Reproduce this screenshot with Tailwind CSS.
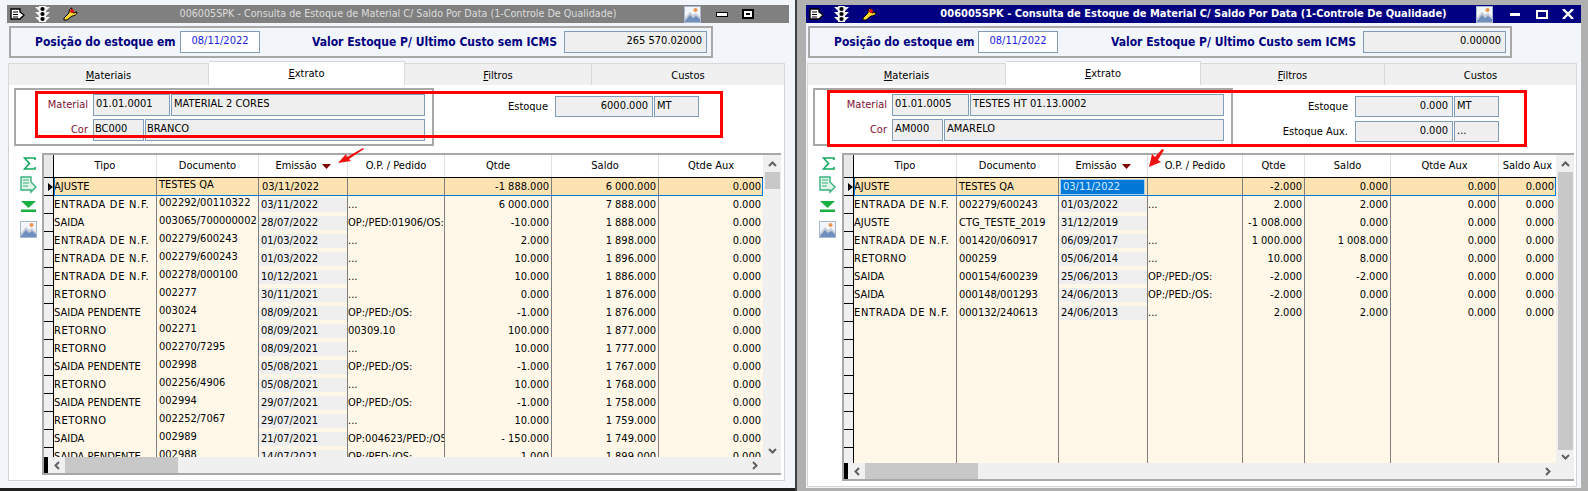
<!DOCTYPE html>
<html lang="pt-BR">
<head>
    <meta charset="UTF-8">
    <title>006005SPK - Consulta de Estoque</title>
    <script src="https://cdn.jsdelivr.net/npm/@tailwindcss/browser@4"></script>
</head>

<body class="relative w-[1588px] h-[491px] overflow-hidden flex bg-[#b0b0b0] text-[11px] text-black font-['DejaVu_Sans_Condensed','Noto_Sans',sans-serif]">
    <!-- icons used in both windows -->
    <svg class="hidden">
        <symbol id="doc-white" viewBox="0 0 15 12">
            <path d="M1 1h9v3l4 3-4 4H1z" fill="#fff" stroke="#000" stroke-width="1.4"/>
            <path d="M3 4h5M3 6.5h5M3 9h5" stroke="#000"/>
        </symbol>
        <symbol id="traffic" viewBox="0 0 15 16">
            <path d="M4 0h7v16H4zM0 1h4v4zM15 1h-4v4zM0 6h4v4zM15 6h-4v4zM0 11h4v4zM15 11h-4v4z" fill="#f4f4f4"/>
            <circle cx="7.5" cy="3" r="2.100" fill="#000"/>
            <circle cx="7.5" cy="8" r="2.100" fill="#000"/>
            <circle cx="7.5" cy="13" r="2.100" fill="#000"/>
        </symbol>
        <symbol id="wrench" viewBox="0 0 15 14">
            <path d="M1 11l5-5c0-3 1-5 3-5l-1 3 2 2 4-1c0 3-3 4-5 4l-5 4H1z" fill="#ffd92e" stroke="#000" stroke-width="1"/>
            <circle cx="9" cy="4" r="2" fill="#e01010"/>
        </symbol>
        <symbol id="picture" viewBox="0 0 17 17">
            <rect x="0.5" y="0.5" width="16" height="16" fill="#f2f5fa" stroke="#a8b8d0"/>
            <path d="M1 16v-3l5-6 3 3 3-2 4 5v3z" fill="#6f8fbc"/>
            <path d="M1 12l5-6 3 3 3-2 4 4v2l-4-3-3 2-3-3-5 6z" fill="#c4ccd8"/>
            <circle cx="11.500" cy="4" r="2" fill="#ee9650"/>
        </symbol>
        <symbol id="sigma" viewBox="0 0 13 13">
            <path d="M12 3V1H1.500L6.500 6.500 1.500 12H12v-2" fill="none" stroke="#10a860" stroke-width="1.600"/>
        </symbol>
        <symbol id="doc-green" viewBox="0 0 17 18">
            <path d="M1 1h10v5l5 5-5 5v-2H1z" fill="#dff5e8" stroke="#38b07c" stroke-width="1.400"/>
            <path d="M3 4h6M3 7h6M3 10h5" stroke="#38b07c"/>
        </symbol>
        <symbol id="down-green" viewBox="0 0 15 11">
            <path d="M0 0h15L7.500 7z" fill="#18b040"/>
            <path d="M0 8.500h15V11H0z" fill="#18b040"/>
        </symbol>
    </svg>

    <!-- left window -->
    <div class="w-[795px] shrink-0 flex flex-col bg-[#f2f5fa]">
        <div class="ml-[7px] mt-[5px] w-[782px] h-[483px] flex flex-col">
            <div class="h-[18px] bg-[#808080] flex items-center text-[#dcdcdc] text-[10.700px]">
                <div class="w-[105px] flex items-center">
                    <svg class="w-[15px] h-[12px] ml-[3px]"><use href="#doc-white"/></svg>
                    <svg class="w-[15px] h-[16px] ml-[10px]"><use href="#traffic"/></svg>
                    <svg class="w-[15px] h-[14px] ml-[13px]"><use href="#wrench"/></svg>
                </div>
                <div class="flex-1 text-center whitespace-nowrap">006005SPK - Consulta de Estoque de Material C/ Saldo Por Data (1-Controle De Qualidade)</div>
                <div class="w-[105px] flex items-center">
                    <svg class="w-[17px] h-[17px]"><use href="#picture"/></svg>
                    <div class="ml-[15px] w-[12px] h-[5px] bg-white border border-black"></div>
                    <div class="ml-[14px] w-[12px] h-[10px] bg-white border-2 border-black flex items-center justify-center"><div class="w-[4px] h-[2px] bg-black"></div></div>
                </div>
            </div>

            <div class="mt-[3px] ml-[2px] w-[704px] h-[32px] border-2 border-[#a8a8a8] flex items-center font-bold text-[#000080] text-[12px]">
                <span class="ml-[24px] w-[143px] whitespace-nowrap">Posição do estoque em</span>
                <div class="ml-[2px] w-[80px] h-[22px] bg-white border border-[#7f9db9] text-[#2020e0] text-[11px] font-normal text-center leading-[18px]">08/11/2022</div>
                <span class="ml-[52px] w-[252px] whitespace-nowrap">Valor Estoque P/ Ultimo Custo sem ICMS</span>
                <div class="w-[143px] h-[22px] bg-[#efefef] border border-[#7f9db9] text-black text-[11px] font-normal text-right pr-[4px] leading-[18px]">265 570.02000</div>
            </div>

            <div class="mt-[3px] h-[24px] ml-[1px] flex items-end text-center">
                <div class="w-[201px] h-[22px] bg-[#f0f0f0] border-t border-r border-l border-[#d8d8d8] leading-[23px]"><u>M</u>ateriais</div>
                <div class="w-[196px] h-[24px] bg-white border-t border-r border-[#d8d8d8] leading-[23px]"><u>E</u>xtrato</div>
                <div class="w-[187px] h-[22px] bg-[#f0f0f0] border-t border-r border-[#d8d8d8] leading-[23px]"><u>F</u>iltros</div>
                <div class="w-[193px] h-[22px] bg-[#f0f0f0] border-t border-r border-[#d8d8d8] leading-[23px]">Custos</div>
            </div>

            <div class="ml-[1px] w-[777px] h-[396px] bg-white border border-t-0 border-[#d4d4d4] pt-[3px]">
                <div class="flex">
                    <div class="ml-[5px] w-[420px] h-[58px] border-2 border-[#a8a8a8] pt-[4px] flex flex-col gap-[3px]">
                        <div class="flex h-[22px]">
                            <span class="w-[72px] text-right text-[#801030] pt-[3px]">Material</span>
                            <div class="ml-[5px] w-[77px] bg-[#efefef] border border-[#7f9db9] px-[2px] leading-[18px]">01.01.0001</div>
                            <div class="ml-[1px] w-[254px] bg-[#efefef] border border-[#7f9db9] px-[2px] leading-[18px]">MATERIAL 2 CORES</div>
                        </div>
                        <div class="flex h-[22px]">
                            <span class="w-[72px] text-right text-[#801030] pt-[3px]">Cor</span>
                            <div class="ml-[5px] w-[51px] bg-[#efefef] border border-[#7f9db9] px-[1px] leading-[18px]">BC000</div>
                            <div class="ml-[1px] w-[280px] bg-[#efefef] border border-[#7f9db9] px-[1px] leading-[18px]">BRANCO</div>
                        </div>
                    </div>
                    <div class="mt-[8px] flex h-[21px]">
                        <span class="w-[114px] text-right pt-[3px]">Estoque</span>
                        <div class="ml-[7px] w-[98px] bg-[#efefef] border border-[#7f9db9] text-right pr-[4px] leading-[17px]">6000.000</div>
                        <div class="ml-[1px] w-[45px] bg-[#efefef] border border-[#7f9db9] px-[2px] leading-[17px]">MT</div>
                    </div>
                </div>
                <div class="mt-[7px] flex">
                    <div class="w-[33px] pl-[11px] pt-[4px] flex flex-col">
                        <svg class="w-[13px] h-[13px] ml-[3px]"><use href="#sigma"/></svg>
                        <svg class="w-[17px] h-[18px] mt-[6px]"><use href="#doc-green"/></svg>
                        <svg class="w-[15px] h-[11px] mt-[7px] ml-[1px]"><use href="#down-green"/></svg>
                        <svg class="w-[17px] h-[17px] mt-[9px]"><use href="#picture"/></svg>
                    </div>
                    <div id="grid-left"></div>
                </div>
            </div>
        </div>
        <div class="flex-1"></div>
        <div class="h-[3px] bg-[#202020]"></div>
    </div>

    <div class="w-[2px] shrink-0 bg-[#404040]"></div>

    <!-- right window -->
    <div class="ml-[9px] mt-[5px] w-[775px] h-[483px] shrink-0 flex flex-col bg-[#f2f5fa]">
        <div class="h-[18px] bg-[#000080] flex items-center text-white font-bold text-[11px]">
            <div class="w-[105px] flex items-center">
                <svg class="w-[15px] h-[12px] ml-[3px]"><use href="#doc-white"/></svg>
                <svg class="w-[15px] h-[16px] ml-[10px]"><use href="#traffic"/></svg>
                <svg class="w-[15px] h-[14px] ml-[13px]"><use href="#wrench"/></svg>
            </div>
            <div class="flex-1 text-center whitespace-nowrap overflow-hidden">006005SPK - Consulta de Estoque de Material C/ Saldo Por Data (1-Controle De Qualidade)</div>
            <div class="w-[105px] flex items-center">
                <svg class="w-[17px] h-[17px]"><use href="#picture"/></svg>
                <div class="ml-[17px] w-[10px] h-[3px] bg-white"></div>
                <div class="ml-[16px] w-[12px] h-[9px] border-2 border-white"></div>
                <svg class="ml-[14px] w-[12px] h-[10px]" viewBox="0 0 12 10"><path d="M1 0l10 10M11 0L1 10" stroke="#fff" stroke-width="2.400"/></svg>
            </div>
        </div>

        <div class="mt-[3px] ml-[2px] w-[704px] h-[32px] border-2 border-[#a8a8a8] flex items-center font-bold text-[#000080] text-[12px]">
            <span class="ml-[24px] w-[143px] whitespace-nowrap">Posição do estoque em</span>
            <div class="ml-[1px] w-[80px] h-[22px] bg-white border border-[#7f9db9] text-[#2020e0] text-[11px] font-normal text-center leading-[18px]">08/11/2022</div>
            <span class="ml-[53px] w-[252px] whitespace-nowrap">Valor Estoque P/ Ultimo Custo sem ICMS</span>
            <div class="w-[143px] h-[22px] bg-[#efefef] border border-[#7f9db9] text-black text-[11px] font-normal text-right pr-[4px] leading-[18px]">0.00000</div>
        </div>

        <div class="mt-[3px] h-[24px] ml-[1px] flex items-end text-center">
            <div class="w-[199px] h-[22px] bg-[#f0f0f0] border-t border-r border-l border-[#d8d8d8] leading-[23px]"><u>M</u>ateriais</div>
            <div class="w-[195px] h-[24px] bg-white border-t border-r border-[#d8d8d8] leading-[23px]"><u>E</u>xtrato</div>
            <div class="w-[184px] h-[22px] bg-[#f0f0f0] border-t border-r border-[#d8d8d8] leading-[23px]"><u>F</u>iltros</div>
            <div class="w-[192px] h-[22px] bg-[#f0f0f0] border-t border-r border-[#d8d8d8] leading-[23px]">Custos</div>
        </div>

        <div class="ml-[1px] w-[770px] h-[402px] bg-white border border-t-0 border-[#d4d4d4] pt-[3px]">
            <div class="flex">
                <div class="ml-[5px] w-[420px] h-[58px] border-2 border-[#a8a8a8] pt-[4px] flex flex-col gap-[3px]">
                    <div class="flex h-[22px]">
                        <span class="w-[72px] text-right text-[#801030] pt-[3px]">Material</span>
                        <div class="ml-[5px] w-[77px] bg-[#efefef] border border-[#7f9db9] px-[2px] leading-[18px]">01.01.0005</div>
                        <div class="ml-[1px] w-[254px] bg-[#efefef] border border-[#7f9db9] px-[2px] leading-[18px]">TESTES HT 01.13.0002</div>
                    </div>
                    <div class="flex h-[22px]">
                        <span class="w-[72px] text-right text-[#801030] pt-[3px]">Cor</span>
                        <div class="ml-[5px] w-[51px] bg-[#efefef] border border-[#7f9db9] px-[2px] leading-[18px]">AM000</div>
                        <div class="ml-[1px] w-[280px] bg-[#efefef] border border-[#7f9db9] px-[2px] leading-[18px]">AMARELO</div>
                    </div>
                </div>
                <div class="mt-[8px] flex flex-col gap-[4px]">
                    <div class="flex h-[21px]">
                        <span class="w-[115px] text-right pt-[3px]">Estoque</span>
                        <div class="ml-[7px] w-[98px] bg-[#efefef] border border-[#7f9db9] text-right pr-[4px] leading-[17px]">0.000</div>
                        <div class="ml-[1px] w-[45px] bg-[#efefef] border border-[#7f9db9] px-[2px] leading-[17px]">MT</div>
                    </div>
                    <div class="flex h-[21px]">
                        <span class="w-[115px] text-right pt-[3px]">Estoque Aux.</span>
                        <div class="ml-[7px] w-[98px] bg-[#efefef] border border-[#7f9db9] text-right pr-[4px] leading-[17px]">0.000</div>
                        <div class="ml-[1px] w-[45px] bg-[#efefef] border border-[#7f9db9] px-[2px] leading-[17px]">...</div>
                    </div>
                </div>
            </div>
            <div class="mt-[7px] flex">
                <div class="w-[34px] pl-[11px] pt-[4px] flex flex-col">
                    <svg class="w-[13px] h-[13px] ml-[3px]"><use href="#sigma"/></svg>
                    <svg class="w-[17px] h-[18px] mt-[6px]"><use href="#doc-green"/></svg>
                    <svg class="w-[15px] h-[11px] mt-[7px] ml-[1px]"><use href="#down-green"/></svg>
                    <svg class="w-[17px] h-[17px] mt-[9px]"><use href="#picture"/></svg>
                </div>
                <div id="grid-right"></div>
            </div>
        </div>
    </div>

    <!-- red annotations drawn over the screenshot -->
    <div class="absolute left-[35px] top-[91px] w-[688px] h-[47px] border-[3px] border-[#ff0000]"></div>
    <div class="absolute left-[827px] top-[90px] w-[700px] h-[57px] border-[3px] border-[#ff0000]"></div>
    <svg class="absolute left-[335px] top-[146px] w-[30px] h-[20px]" viewBox="0 0 30 20">
        <path d="M3 17l8-9 1 3 16-9 1 1-15 10 2 2z" fill="#ee1111"/>
    </svg>
    <svg class="absolute left-[1147px] top-[147px] w-[18px] h-[22px]" viewBox="0 0 18 22">
        <path d="M2 20l3-13 3 3 7-8 2 1-6 10 3 2z" fill="#ee1111"/>
    </svg>

    <script>
        const leftRows = [
            ['AJUSTE', 'TESTES QA', '03/11/2022', '', '-1 888.000', '6 000.000', '0.000'],
            ['ENTRADA DE N.F.', '002292/00110322', '03/11/2022', '...', '6 000.000', '7 888.000', '0.000'],
            ['SAIDA', '003065/700000002', '28/07/2022', 'OP:/PED:01906/OS:', '-10.000', '1 888.000', '0.000'],
            ['ENTRADA DE N.F.', '002279/600243', '01/03/2022', '...', '2.000', '1 898.000', '0.000'],
            ['ENTRADA DE N.F.', '002279/600243', '01/03/2022', '...', '10.000', '1 896.000', '0.000'],
            ['ENTRADA DE N.F.', '002278/000100', '10/12/2021', '...', '10.000', '1 886.000', '0.000'],
            ['RETORNO', '002277', '30/11/2021', '...', '0.000', '1 876.000', '0.000'],
            ['SAIDA PENDENTE', '003024', '08/09/2021', 'OP:/PED:/OS:', '-1.000', '1 876.000', '0.000'],
            ['RETORNO', '002271', '08/09/2021', '00309.10', '100.000', '1 877.000', '0.000'],
            ['RETORNO', '002270/7295', '08/09/2021', '...', '10.000', '1 777.000', '0.000'],
            ['SAIDA PENDENTE', '002998', '05/08/2021', 'OP:/PED:/OS:', '-1.000', '1 767.000', '0.000'],
            ['RETORNO', '002256/4906', '05/08/2021', '...', '10.000', '1 768.000', '0.000'],
            ['SAIDA PENDENTE', '002994', '29/07/2021', 'OP:/PED:/OS:', '-1.000', '1 758.000', '0.000'],
            ['RETORNO', '002252/7067', '29/07/2021', '...', '10.000', '1 759.000', '0.000'],
            ['SAIDA', '002989', '21/07/2021', 'OP:004623/PED:/OS:', '- 150.000', '1 749.000', '0.000'],
            ['SAIDA PENDENTE', '002988', '14/07/2021', 'OP:/PED:/OS:', '-1.000', '1 899.000', '0.000'],
        ];

        const rightRows = [
            ['AJUSTE', 'TESTES QA', '03/11/2022', '', '-2.000', '0.000', '0.000', '0.000'],
            ['ENTRADA DE N.F.', '002279/600243', '01/03/2022', '...', '2.000', '2.000', '0.000', '0.000'],
            ['AJUSTE', 'CTG_TESTE_2019', '31/12/2019', '', '-1 008.000', '0.000', '0.000', '0.000'],
            ['ENTRADA DE N.F.', '001420/060917', '06/09/2017', '...', '1 000.000', '1 008.000', '0.000', '0.000'],
            ['RETORNO', '000259', '05/06/2014', '...', '10.000', '8.000', '0.000', '0.000'],
            ['SAIDA', '000154/600239', '25/06/2013', 'OP:/PED:/OS:', '-2.000', '-2.000', '0.000', '0.000'],
            ['SAIDA', '000148/001293', '24/06/2013', 'OP:/PED:/OS:', '-2.000', '0.000', '0.000', '0.000'],
            ['ENTRADA DE N.F.', '000132/240613', '24/06/2013', '...', '2.000', '2.000', '0.000', '0.000'],
            ['', '', '', '', '', '', '', ''], ['', '', '', '', '', '', '', ''],
            ['', '', '', '', '', '', '', ''], ['', '', '', '', '', '', '', ''],
            ['', '', '', '', '', '', '', ''], ['', '', '', '', '', '', '', ''],
            ['', '', '', '', '', '', '', ''], ['', '', '', '', '', '', '', ''],
        ];

        const dividerClass = 'border-r border-[#808080]';

        // Tipo column: these words run wider in the original font
        function tipoSpacing(text) {
            if (text.includes('N.F.')) return 'tracking-[0.7px]';
            if (text === 'RETORNO') return 'tracking-[0.5px]';
            return '';
        }

        function renderGrid(targetId, cfg) {
            const head = cfg.headers.map((h) => {
                const sort = h === 'Emissão'
                    ? '<svg class="w-[9px] h-[5px] ml-[5px]" viewBox="0 0 9 5"><path d="M0 0h9L4.500 5z" fill="#800000"/></svg>' : '';
                return `<div class="h-full flex items-center justify-center border-r border-[#e0e0e0] whitespace-nowrap overflow-hidden">${h}${sort}</div>`;
            }).join('');

            const body = cfg.rows.map((row, r) => {
                const selected = r === 0;
                const cells = row.map((text, i) => {
                    const base = 'h-[18px] overflow-hidden whitespace-nowrap ' + dividerClass;
                    if (i === 2) {
                        if (selected && cfg.editing) {
                            return `<div class="${base} p-[1px] pr-[2px]"><div class="h-full bg-[#0078d7] border border-[#a8d0f0] text-[#d8ecff] pl-[2px] leading-[14px]">${text}</div></div>`;
                        }
                        if (selected) return `<div class="${base} pl-[3px] leading-[18px]">${text}</div>`;
                        if (!text) return `<div class="${base}"></div>`;
                        return `<div class="${base} py-[2px]"><div class="h-[14px] bg-[#efefef] pl-[2px] leading-[14px]">${text}</div></div>`;
                    }
                    if (i === 1) {
                        return `<div class="${base} pl-[2px] ${cfg.raiseDoc ? 'leading-[13px]' : 'leading-[18px]'}">${text}</div>`;
                    }
                    if (i >= 4) return `<div class="${base} text-right pr-[2px] leading-[18px]">${text}</div>`;
                    return `<div class="${base} leading-[18px] ${i === 0 ? tipoSpacing(text) : ''}">${text}</div>`;
                }).join('');
                const marker = selected
                    ? '<svg class="w-[5px] h-[8px] ml-[4px] mt-[5px]" viewBox="0 0 5 8"><path d="M0 0l5 4-5 4z" fill="#000"/></svg>' : '';
                // focus outline of the current record
                const outline = selected
                    ? '<div class="absolute left-[10px] right-0 inset-y-0 border-l border-r border-b border-[#0078d7] pointer-events-none"></div>' : '';
                return `<div class="relative grid ${cfg.cols} ${selected ? 'bg-[#fde3b2]' : 'bg-[#fff8e8]'}">
                    <div class="h-[18px] bg-[#efefef] border-r border-b border-black">${marker}</div>${cells}${outline}</div>`;
            }).join('');

            document.getElementById(targetId).innerHTML = `
                <div class="${cfg.size} flex flex-col border-2 border-r-0 border-[#a8a8a8] relative">
                    <div class="flex flex-1 min-h-0">
                        <div class="${cfg.bodyWidth} flex flex-col overflow-hidden">
                            <div class="grid ${cfg.cols} h-[23px] shrink-0 border-b border-black bg-white">
                                <div class="bg-[#e8e8e8] border-r border-black"></div>${head}
                            </div>
                            <div class="flex-1 overflow-hidden bg-[#fff8e8]">${body}</div>
                        </div>
                        <div class="w-[18px] bg-[#f0f0f0] flex flex-col items-center">
                            <svg class="w-[9px] h-[6px] mt-[6px] mb-[5px]" viewBox="0 0 9 6"><path d="M1 5l3.500-3.500L8 5" fill="none" stroke="#606060" stroke-width="2"/></svg>
                            <div class="w-[15px] ${cfg.thumb} bg-[#c8c8c8]"></div>
                            <div class="flex-1"></div>
                            <svg class="w-[9px] h-[6px] mb-[3px]" viewBox="0 0 9 6"><path d="M1 1l3.500 3.500L8 1" fill="none" stroke="#606060" stroke-width="2"/></svg>
                        </div>
                    </div>
                    <div class="h-[16px] shrink-0 flex bg-[#f0f0f0]">
                        <div class="w-[4px] bg-black"></div>
                        <div class="w-[17px] flex items-center justify-center">
                            <svg class="w-[6px] h-[9px]" viewBox="0 0 6 9"><path d="M5 1L1.500 4.500 5 8" fill="none" stroke="#606060" stroke-width="2"/></svg>
                        </div>
                        <div class="w-[113px] bg-[#c8c8c8]"></div>
                        <div class="flex-1 flex items-center justify-end pr-[23px]">
                            <svg class="w-[6px] h-[9px]" viewBox="0 0 6 9"><path d="M1 1l3.500 3.500L1 8" fill="none" stroke="#606060" stroke-width="2"/></svg>
                        </div>
                    </div>
                </div>`;
        }

        renderGrid('grid-left', {
            headers: ['Tipo', 'Documento', 'Emissão', 'O.P. / Pedido', 'Qtde', 'Saldo', 'Qtde Aux'],
            rows: leftRows,
            cols: 'grid-cols-[10px_103px_102px_89px_97px_107px_107px_105px]',
            size: 'w-[739px] h-[322px]',
            bodyWidth: 'w-[720px]',
            thumb: 'h-[17px]',
            raiseDoc: true,
        });

        renderGrid('grid-right', {
            headers: ['Tipo', 'Documento', 'Emissão', 'O.P. / Pedido', 'Qtde', 'Saldo', 'Qtde Aux', 'Saldo Aux'],
            rows: rightRows,
            cols: 'grid-cols-[10px_103px_102px_89px_95px_62px_86px_108px_58px]',
            size: 'w-[732px] h-[328px]',
            bodyWidth: 'w-[713px]',
            thumb: 'h-[278px]',
            editing: true,
        });
    </script>
</body>
</html>
